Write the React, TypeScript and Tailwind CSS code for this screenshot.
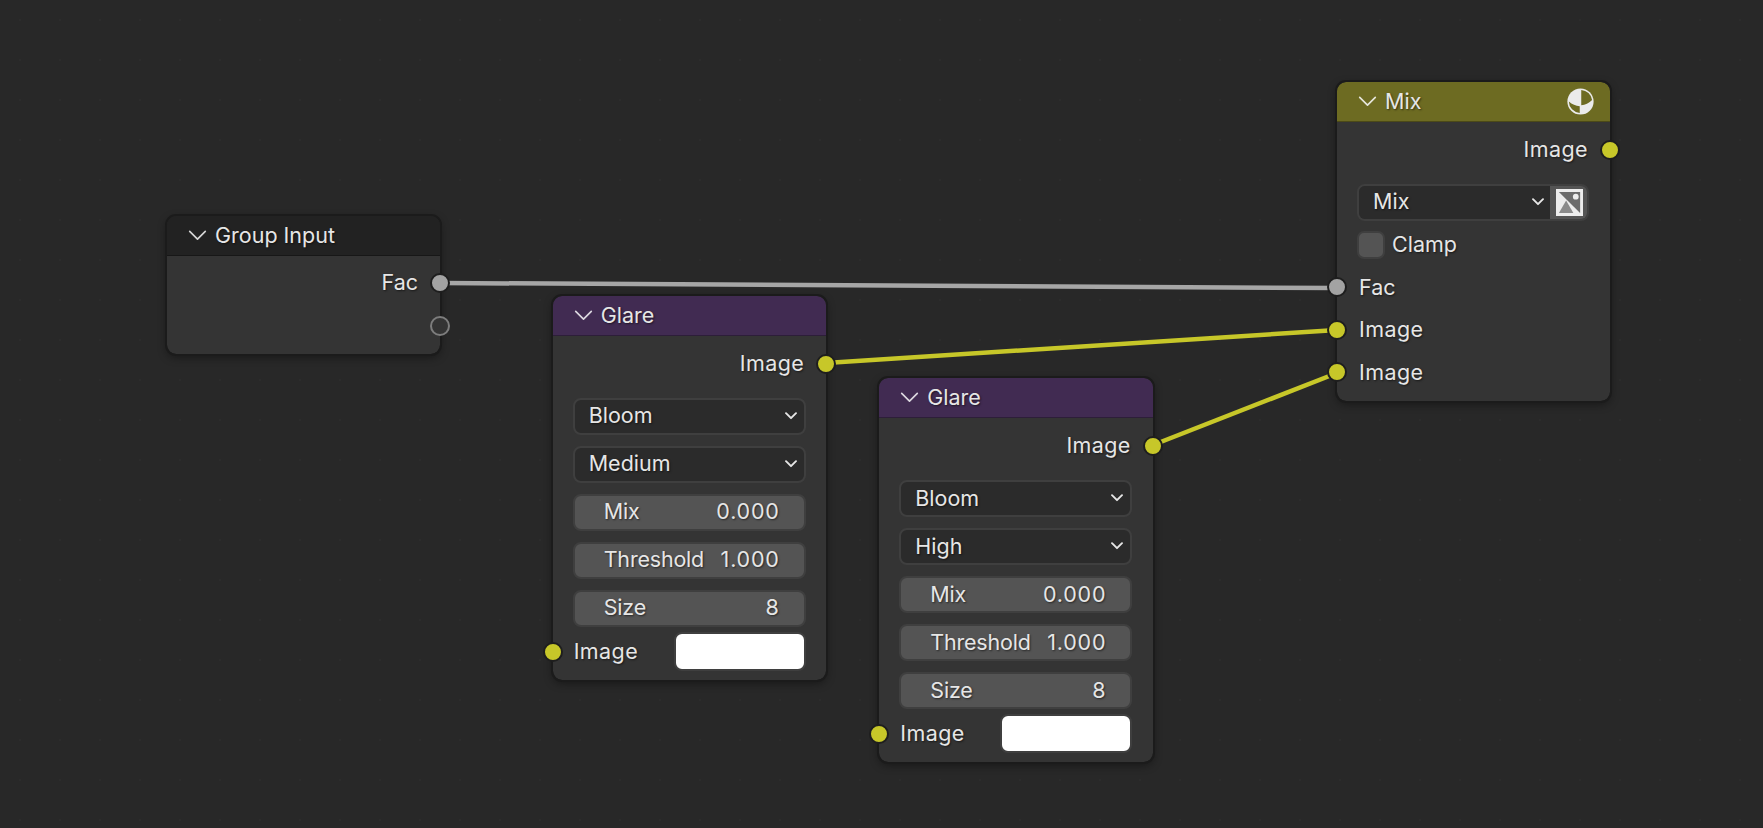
import React from "react";

function Chevron({ className }: { className: string }) {
  return (
    <svg className={className} viewBox="0 0 20 12" fill="none">
      <path d="M1.5 1.5 L10 10 L18.5 1.5" stroke="currentColor" strokeWidth="1.8" strokeLinecap="round" strokeLinejoin="round" />
    </svg>
  );
}

function SmallChevron() {
  return (
    <svg className="w-[12px] h-[8px] text-[#e6e6e6] shrink-0" viewBox="0 0 12 8" fill="none">
      <path d="M1 1.2 L6 6.2 L11 1.2" stroke="currentColor" strokeWidth="1.9" strokeLinecap="round" strokeLinejoin="round" />
    </svg>
  );
}

function Socket({ color, side, hollow }: { color: string; side: "left" | "right"; hollow?: boolean }) {
  return (
    <span
      className={
        "absolute top-1/2 -translate-y-1/2 w-[20px] h-[20px] rounded-full border-2 " +
        (side === "left" ? "left-[-10px] " : "right-[-10px] ") +
        (hollow ? "border-[#7d7d7d] bg-[#343434]" : "border-[#1e1e1e]")
      }
      style={hollow ? undefined : { backgroundColor: color }}
    />
  );
}

const shadow = "[text-shadow:1px_1px_2px_rgba(0,0,0,0.55)]";
const txt = "text-[21.5px] text-[#e6e6e6] leading-none " + shadow;
const nodeBox = "absolute rounded-[9px] bg-[#343434] outline-2 outline-[#1b1b1b] shadow-[0_3px_10px_rgba(0,0,0,0.45)]";

function Header({ title, bg, chevron, icon }: { title: string; bg: string; chevron: string; icon?: React.ReactNode }) {
  return (
    <div className={"h-[40px] flex items-center pl-[21px] pr-[16px] rounded-t-[9px] border-b border-black/30 " + bg}>
      <Chevron className={"w-[19px] h-[11px] mr-[8px] " + chevron} />
      <span className={txt}>{title}</span>
      {icon && <span className="ml-auto">{icon}</span>}
    </div>
  );
}

function Row({ text, align, color, hollow, h = "h-[43px]" }: { text?: string; align: "left" | "right"; color?: string; hollow?: boolean; h?: string }) {
  return (
    <div className={"relative flex items-center " + h + " " + (align === "right" ? "justify-end pr-[22px]" : "pl-[22px]")}>
      {text && <span className={txt + (text === "Image" ? " tracking-[0.4px]" : "")}>{text}</span>}
      <Socket color={color ?? "#c7c729"} side={align} hollow={hollow} />
    </div>
  );
}

function Dropdown({ text }: { text: string }) {
  return (
    <div className="h-[37px] rounded-[8px] bg-[#2b2b2b] border-2 border-[#3f3f3f] flex items-center justify-between pl-[14px] pr-[7px]">
      <span className={txt}>{text}</span>
      <SmallChevron />
    </div>
  );
}

function Field({ name, value }: { name: string; value: string }) {
  return (
    <div className="h-[37px] rounded-[8px] bg-[#545454] border-2 border-[#3f3f3f] flex items-center justify-between pl-[29px] pr-[24px]">
      <span className={txt + " tracking-[-0.2px]"}>{name}</span>
      <span className={txt + " tracking-[0.8px]"}>{value}</span>
    </div>
  );
}

function GlareNode({ pos, quality }: { pos: string; quality: string }) {
  return (
    <div className={nodeBox + " w-[273.5px] h-[384px] " + pos}>
      <Header title="Glare" bg="bg-[#412b52]" chevron="text-[#dcd8e0]" />
      <div className="pt-[6px]">
        <Row text="Image" align="right" />
        <div className="flex flex-col gap-[11px] pl-[20px] pr-[20.5px] pt-[12.5px]">
          <Dropdown text="Bloom" />
          <Dropdown text={quality} />
          <Field name="Mix" value="0.000" />
          <Field name="Threshold" value="1.000" />
          <Field name="Size" value="8" />
        </div>
        <div className="relative h-[39px] mt-[5.5px] flex items-center pl-[21px] pr-[20.5px] justify-between">
          <span className={txt + " tracking-[0.4px]"}>Image</span>
          <span className="w-[132px] h-[39px] rounded-[8px] bg-white border-2 border-[#3f3f3f]" />
          <Socket color="#c7c729" side="left" />
        </div>
      </div>
    </div>
  );
}

function MixIcon() {
  return (
    <svg className="w-[27px] h-[27px] block" viewBox="0 0 28 28">
      <circle cx="14" cy="14" r="13.6" fill="#ebebeb" />
      <path d="M14.8 2 A12 12 0 0 1 26 12.4 Q21 17.4 14.8 18 Z" fill="#6d6b22" />
      <path d="M1.9 14 Q7 18.4 13.2 18.8 L13.2 25.8 A12 12 0 0 1 1.9 14 Z" fill="#6d6b22" />
    </svg>
  );
}

function ImageIcon() {
  return (
    <svg className="w-[27px] h-[27px] translate-x-[1px]" viewBox="0 0 28 28">
      <rect x="0" y="0" width="28" height="28" fill="#ececec" />
      <path d="M3 3 H25 V25 Z" fill="#6b6b6b" />
      <circle cx="20.5" cy="8" r="3" fill="#ececec" />
      <path d="M3 25 L10.5 12 L18 25 Z" fill="#8a8a8a" />
    </svg>
  );
}

export default function App() {
  return (
    <div className="relative w-[1763px] h-[828px] overflow-hidden bg-[#282828] bg-[radial-gradient(circle,#2c2c2c_1px,transparent_1.5px)] bg-[length:40px_40px] font-['Inter',sans-serif]">
      <svg className="absolute inset-0 w-full h-full" viewBox="0 0 1763 828" fill="none">
        <path d="M441 283 L1337 288" stroke="#a6a6a6" strokeWidth="4.5" />
        <path d="M826 363 L1337 330" stroke="#c7c729" strokeWidth="4.5" />
        <path d="M1153 445 L1337 373" stroke="#c7c729" strokeWidth="4.5" />
      </svg>

      <div className={nodeBox + " left-[167px] top-[216px] w-[273px] h-[138px]"}>
        <Header title="Group Input" bg="bg-[#222222]" chevron="text-[#d6d6d6]" />
        <div className="pt-[5px]">
          <Row text="Fac" align="right" color="#a3a3a3" />
          <Row align="right" hollow />
        </div>
      </div>

      <GlareNode pos="left-[552.7px] top-[296px]" quality="Medium" />
      <GlareNode pos="left-[879.3px] top-[378.4px]" quality="High" />

      <div className={nodeBox + " left-[1337px] top-[82px] w-[273px] h-[319px]"}>
        <Header title="Mix" bg="bg-[#6d6b22]" chevron="text-[#e6e6dc]" icon={<MixIcon />} />
        <div className="pt-[6px]">
          <Row text="Image" align="right" />
          <div className="px-[20px] pt-[12.5px] flex flex-col gap-[10px]">
            <div className="flex h-[37px] w-[232px] rounded-[8px] border-2 border-[#3f3f3f] overflow-hidden">
              <div className="flex-1 bg-[#2b2b2b] flex items-center justify-between pl-[14px] pr-[6px]">
                <span className={txt}>Mix</span>
                <SmallChevron />
              </div>
              <div className="w-[37px] bg-[#545454] flex items-center justify-center">
                <ImageIcon />
              </div>
            </div>
            <div className="flex items-center h-[28px]">
              <span className="w-[28px] h-[28px] rounded-[7px] bg-[#545454] border-2 border-[#3f3f3f]" />
              <span className={txt + " ml-[7px]"}>Clamp</span>
            </div>
          </div>
          <div className="pt-[7.5px]">
            <Row text="Fac" align="left" color="#a3a3a3" h="h-[42.5px]" />
            <Row text="Image" align="left" h="h-[42.5px]" />
            <Row text="Image" align="left" h="h-[42.5px]" />
          </div>
        </div>
      </div>
    </div>
  );
}
